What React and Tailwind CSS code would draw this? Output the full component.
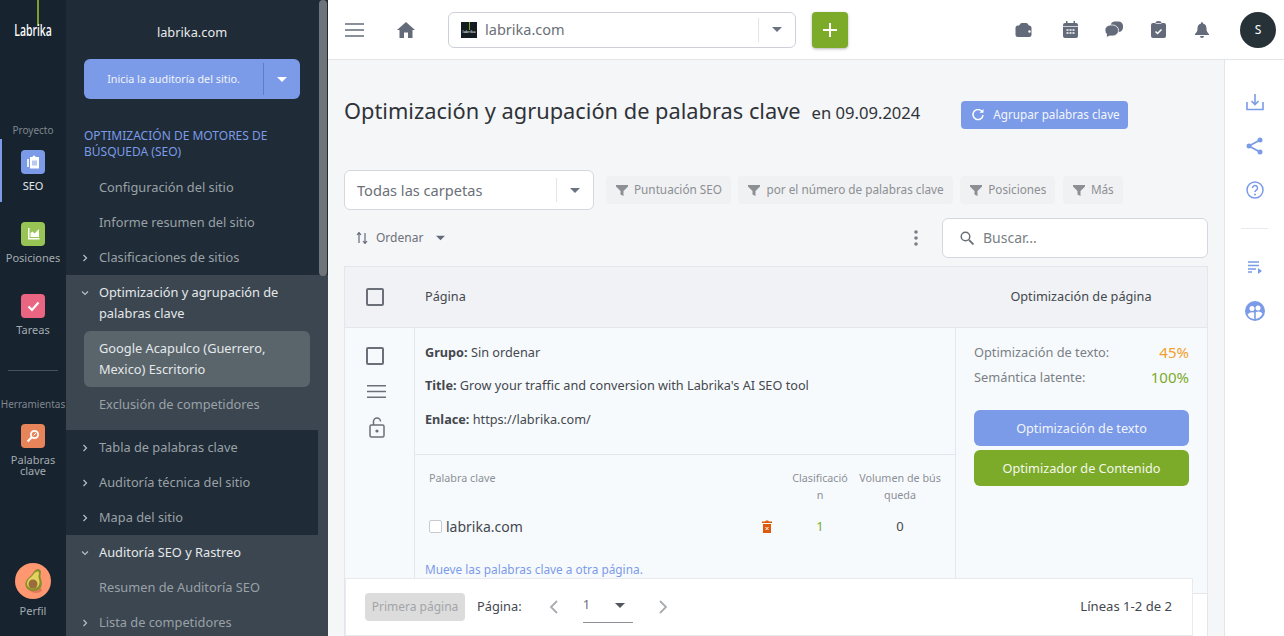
import React from "react";

const sans = "font-['Noto_Sans','Open_Sans',sans-serif]";

function Funnel() {
  return (
    <svg width="12" height="11" viewBox="0 0 12 11" className="shrink-0">
      <path d="M0 0h12v1.4L7.500 6v5L4.500 9.500V6L0 1.400z" fill="#8c8f94" />
    </svg>
  );
}

function Caret({ color = "#6b7280", w = 10, h = 5 }) {
  return (
    <svg width={w} height={h} viewBox="0 0 10 5" className="shrink-0">
      <path d="M0 0h10L5 5z" fill={color} />
    </svg>
  );
}

function Chevron({ open }) {
  return (
    <svg width="8" height="8" viewBox="0 0 8 8" className="shrink-0">
      <path d={open ? "M1 2.500 4 5.500 7 2.500" : "M2.500 1 5.500 4 2.500 7"} fill="none" stroke="#b9c0c6" strokeWidth="1.200" />
    </svg>
  );
}

function NavItem({ chevron, open, active, children, className = "" }) {
  return (
    <div className={`flex items-start pl-[15px] pr-2 ${className}`}>
      <span className="w-[18px] h-[21px] flex items-center shrink-0">
        {chevron && <Chevron open={open} />}
      </span>
      <span className={`text-[12.800px] leading-[21px] ${active ? "text-[#e5e8ea]" : "text-[#9aa1a7]"}`}>{children}</span>
    </div>
  );
}

function RailItem({ label, color, children, active, labelClass = "" }) {
  return (
    <div className="relative flex flex-col items-center w-[66px]">
      {active && <span className="absolute left-0 top-[-11px] w-[2px] h-[63px] bg-[#7b9be8]" />}
      <div className={`w-6 h-6 rounded-[4px] flex items-center justify-center ${color}`}>{children}</div>
      <div className={`mt-[6px] text-[11px] leading-[11px] text-center ${labelClass}`}>{label}</div>
    </div>
  );
}

function TopIcon({ children, className = "" }) {
  return <div className={`w-[18px] h-[18px] flex items-center justify-center ${className}`}>{children}</div>;
}

function Chip({ children }) {
  return (
    <div className="h-[28px] pl-[10px] pr-[9px] flex items-center gap-[6px] bg-[#f0f1f2] rounded-[4px] text-[11.750px] text-[#8c8f94]">
      <Funnel />
      <span>{children}</span>
    </div>
  );
}

function Checkbox() {
  return <div className="w-[18px] h-[18px] border-2 border-[#6b7078] rounded-[2px]" />;
}

export default function App() {
  return (
    <div className={`${sans} w-[1284px] h-[636px] flex overflow-hidden bg-[#f5f6f8]`}>
      {/* rail */}
      <aside className="w-[66px] shrink-0 bg-[#17232e] flex flex-col items-center text-[#a4abb1]">
        <div className="relative h-[45px] w-[66px] flex flex-col items-center">
          <span className="absolute left-[37px] top-0 w-[2px] h-[26px] bg-[#7a9f2a]" />
          <span className="absolute top-[20px] left-0 w-[66px] text-center text-[16px] leading-[20px] font-medium scale-x-[0.66] text-white">Labrika</span>
        </div>
        <div className="mt-[79px] text-[10px] leading-[12px] text-[#7f878e]">Proyecto</div>
        <div className="mt-[14px]">
          <RailItem label="SEO" color="bg-[#7b9be8]" active labelClass="text-[#e8eaec]">
            <svg width="14" height="14" viewBox="0 0 14 14"><path d="M4 2h2.500a1.500 1.500 0 0 1 3 0H13v11.500H4z" fill="#fff" /><path d="M1 4h2v8H1z" fill="#fff" opacity=".85" /><path d="M6 5.500h5v5H6z" fill="#b9c9f2" /></svg>
          </RailItem>
        </div>
        <div className="mt-[31px]">
          <RailItem label="Posiciones" color="bg-[#97c455]">
            <svg width="13" height="13" viewBox="0 0 13 13"><path d="M1 0v11.500h11.500V10H2.500V0z" fill="#fff" /><path d="M3.500 9V5l2-1.500 2 2L12 1v8z" fill="#fff" /></svg>
          </RailItem>
        </div>
        <div className="mt-[31px]">
          <RailItem label="Tareas" color="bg-[#ea6582]">
            <svg width="13" height="11" viewBox="0 0 13 11"><path d="M1.500 5.500 5 9l6.500-7.500" fill="none" stroke="#fff" strokeWidth="2.200" /></svg>
          </RailItem>
        </div>
        <div className="mt-[35px] w-[50px] h-px bg-[#47515b]" />
        <div className="mt-[27px] text-[10px] leading-[12px] text-[#7f878e] whitespace-nowrap">Herramientas</div>
        <div className="mt-[14px]">
          <RailItem label={<>Palabras<br />clave</>} color="bg-[#e8845a]">
            <svg width="14" height="14" viewBox="0 0 14 14"><circle cx="8.500" cy="5.500" r="3.600" fill="none" stroke="#fff" strokeWidth="1.800" /><path d="M6 8 1.500 12.500" stroke="#fff" strokeWidth="2.200" /><path d="M7.500 6.500 10 4" stroke="#fff" /></svg>
          </RailItem>
        </div>
        <div className="mt-[87px] w-[36px] h-[36px] rounded-full bg-[#ff9770] flex items-center justify-center">
          <svg width="24" height="28" viewBox="0 0 24 28">
            <ellipse cx="15" cy="23" rx="6" ry="3" fill="#e0795c" />
            <path d="M17 2c3 0 3.500 3 2.500 6-1 2 2.500 6 1 11-1.500 5-10 7-14 3-4-4-2-9 2-12 3-2 5-8 8.500-8z" fill="#8a8f2c" />
            <path d="M16.500 4.500c1.800 0 1.800 2 1 4-.7 2 2 5 .7 9-1.300 4-7.500 5.500-10.700 2.300-3-3-1-7 2-9.300 2.500-2 4.500-6 7-6z" fill="#e2d25f" />
            <circle cx="12" cy="17" r="4.500" fill="#9a6b3c" />
          </svg>
        </div>
        <div className="mt-[5px] text-[11px] leading-[14px]">Perfil</div>
      </aside>

      {/* nav */}
      <nav className="relative w-[262px] shrink-0 bg-[#3b4650] overflow-hidden">
        <div className="bg-[#1f2b36] h-[275px]">
          <div className="pt-[23px] text-center pr-[10px] text-[12.800px] leading-[18px] text-[#e8eaec]">labrika.com</div>
          <div className="mt-[18px] ml-[18px] w-[216px] h-[40px] bg-[#7b9be8] rounded-[6px] flex items-center text-[10.800px] text-[#f0f3fb]">
            <span className="flex-1 text-center">Inicia la auditoría del sitio.</span>
            <span className="w-px h-8 bg-[#5f7dc7]" />
            <span className="w-[36px] flex justify-center"><Caret color="#fff" /></span>
          </div>
          <div className="mt-[29px] pl-[18px] pr-[30px] text-[12px] leading-[16px] text-[#7b9be8]">OPTIMIZACIÓN DE MOTORES DE BÚSQUEDA (SEO)</div>
          <div className="mt-[17px] flex flex-col gap-[14px]">
            <NavItem>Configuración del sitio</NavItem>
            <NavItem>Informe resumen del sitio</NavItem>
            <NavItem chevron>Clasificaciones de sitios</NavItem>
          </div>
        </div>
        <div className="h-[155px] pt-[7px]">
          <NavItem chevron open active>Optimización y agrupación de palabras clave</NavItem>
          <div className="mt-[7px] ml-[18px] mr-[18px] w-[226px] h-[56px] bg-[#59656b] rounded-[6px] pl-[15px] pt-[7px] text-[12.800px] leading-[21px] text-[#e5e8ea]">Google Acapulco (Guerrero, Mexico) Escritorio</div>
          <NavItem className="mt-[7px]">Exclusión de competidores</NavItem>
        </div>
        <div className="w-[252px] h-[105px] bg-[#1f2b36] pt-[7px] flex flex-col gap-[14px]">
          <NavItem chevron>Tabla de palabras clave</NavItem>
          <NavItem chevron>Auditoría técnica del sitio</NavItem>
          <NavItem chevron>Mapa del sitio</NavItem>
        </div>
        <div className="pt-[7px] flex flex-col gap-[14px]">
          <NavItem chevron open active>Auditoría SEO y Rastreo</NavItem>
          <NavItem>Resumen de Auditoría SEO</NavItem>
          <NavItem chevron>Lista de competidores</NavItem>
        </div>
        <div className="absolute right-[1px] top-0 w-[8px] h-[276px] rounded-[4px] bg-[#6f747a]" />
      </nav>

      {/* main */}
      <div className="flex-1 min-w-0 flex flex-col">
        <header className="h-[60px] shrink-0 bg-white border-b border-[#e4e5e9] flex items-center pl-[17px] pr-[8px]">
          <svg width="19" height="14" viewBox="0 0 19 14"><path d="M0 1h19M0 7h19M0 13h19" stroke="#666d79" strokeWidth="1.700" /></svg>
          <svg className="ml-[33px]" width="18" height="16" viewBox="0 0 18 16"><path d="M9 0 0 8h2.500v8H7v-5.500h4V16h4.500V8H18z" fill="#636b7b" /></svg>
          <div className="ml-[33px] w-[348px] h-[36px] bg-white border border-[#cdd0db] rounded-[6px] flex items-center pl-[12px]">
            <span className="relative w-4 h-4 bg-[#141c22] flex items-center justify-center">
              <span className="absolute top-0 w-px h-2 bg-[#7cab2a]" />
              <span className="text-[4px] leading-none text-white mt-1">labrika</span>
            </span>
            <span className="ml-2 text-[14.500px] text-[#6b7078]">labrika.com</span>
            <span className="ml-auto w-px h-6 bg-[#e4e5e9]" />
            <span className="w-[36px] flex justify-center"><Caret /></span>
          </div>
          <button className="ml-[16px] w-[36px] h-[36px] rounded-[4px] bg-[#7cab2a] shadow-[0_1px_3px_rgba(0,0,0,0.3)] flex items-center justify-center">
            <svg width="14" height="14" viewBox="0 0 14 14"><path d="M7 0v14M0 7h14" stroke="#fff" strokeWidth="2" /></svg>
          </button>
          <div className="ml-auto flex items-center gap-[26px]">
            <TopIcon className="mr-[3px]">
              <svg width="17" height="16" viewBox="0 0 17 16"><path d="M3.500 4.500 5.500 1.500Q6 1 7 1h4q1 0 1.500.5l2 3z" fill="#636b7b" /><rect x="0.500" y="3.500" width="16" height="11.500" rx="2.500" fill="#636b7b" /><circle cx="14.500" cy="9.500" r="1.200" fill="#fff" /></svg>
            </TopIcon>
            <TopIcon>
              <svg width="15" height="17" viewBox="0 0 15 17"><path d="M0 4q0-2 2-2h1V0h1.500v2h6V0H12v2h1q2 0 2 2v11q0 2-2 2H2q-2 0-2-2z" fill="#636b7b" /><path d="M0 5.500h15" stroke="#fff" strokeWidth=".7" /><path d="M3.500 9h2M6.500 9h2M9.500 9h2M3.500 12h2M6.500 12h2M9.500 12h2" stroke="#fff" strokeWidth="1.500" /></svg>
            </TopIcon>
            <TopIcon>
              <svg width="18" height="17" viewBox="0 0 18 17"><rect x="5.500" y="0.500" width="12.500" height="10.500" rx="4.500" fill="#636b7b" /><path d="M0 9.500a5.500 5 0 0 1 5.500-5.500h2a5.500 5 0 0 1 0 11h-3L1.500 16.500V13Q0 11.500 0 9.500z" fill="#636b7b" stroke="#fff" strokeWidth=".8" /></svg>
            </TopIcon>
            <TopIcon>
              <svg width="15" height="17" viewBox="0 0 15 17"><path d="M0 4q0-2 2-2h2.500a3 2 0 0 1 6 0H13q2 0 2 2v11q0 2-2 2H2q-2 0-2-2z" fill="#636b7b" /><path d="M4.500 2.500h6" stroke="#fff" strokeWidth=".7" /><path d="m4.500 10.500 2 2 4-4" fill="none" stroke="#fff" strokeWidth="1.500" /></svg>
            </TopIcon>
            <TopIcon>
              <svg width="14" height="16" viewBox="0 0 14 16"><path d="M7 0q1 0 1 1.500c2.500.5 3.500 2.500 3.500 5 0 3 1 4 2.500 5.500v1H0v-1c1.500-1.500 2.500-2.500 2.500-5.500 0-2.500 1-4.500 3.500-5Q6 0 7 0zM5 14h4a2 2 0 0 1-4 0z" fill="#636b7b" /></svg>
            </TopIcon>
          </div>
          <div className="ml-[29px] w-[36px] h-[36px] rounded-full bg-[#263238] flex items-center justify-center text-[12px] text-white">S</div>
        </header>

        <div className="flex-1 min-h-0 flex">
          <main className="relative flex-1 min-w-0 pl-[16px] pr-[16px] overflow-hidden">
            <div className="h-[110px] flex items-center">
              <h1 className="text-[21.800px] leading-[28px] font-normal text-[#2f3338] mb-[8px]">Optimización y agrupación de palabras clave</h1>
              <span className="ml-[11px] text-[16.600px] text-[#2f3338] mb-[4px]">en 09.09.2024</span>
              <button className="ml-[41px] mb-[1px] h-[28px] pl-[11px] pr-[8px] bg-[#7b9be8] rounded-[4px] flex items-center gap-[9px] text-[11.700px] text-[#f4f6fc]">
                <svg width="12" height="12" viewBox="0 0 12 12"><path d="M10.300 3A5 5 0 1 0 11 6" fill="none" stroke="#fff" strokeWidth="1.500" /><path d="M7.500 3.800H11.500V0z" fill="#fff" /></svg>
                Agrupar palabras clave
              </button>
            </div>
            <div className="flex items-center">
              <div className="w-[250px] h-[40px] bg-white border border-[#d5d8e1] rounded-[6px] flex items-center pl-[12px] text-[14.600px] text-[#6b7078]">
                <span className="mt-[1px]">Todas las carpetas</span>
                <span className="ml-auto w-px h-6 bg-[#e4e5e9]" />
                <span className="w-[36px] flex justify-center"><Caret /></span>
              </div>
              <div className="ml-[12px] flex gap-[7.500px]">
                <Chip>Puntuación SEO</Chip>
                <Chip>por el número de palabras clave</Chip>
                <Chip>Posiciones</Chip>
                <Chip>Más</Chip>
              </div>
            </div>
            <div className="mt-[8px] h-[40px] flex items-center">
              <svg className="ml-[12px]" width="12" height="12" viewBox="0 0 12 12"><path d="M3 11V1M1 3l2-2.500L5 3M9 1v10M7 9l2 2.500L11 9" fill="none" stroke="#636b7b" strokeWidth="1.200" /></svg>
              <span className="ml-[8px] text-[12px] text-[#6b7078]">Ordenar</span>
              <span className="ml-[13px]"><Caret color="#636b7b" w={9} h={6} /></span>
              <svg className="ml-auto mr-[24px]" width="4" height="16" viewBox="0 0 4 16"><circle cx="2" cy="2" r="1.800" fill="#7a7f85" /><circle cx="2" cy="8" r="1.800" fill="#7a7f85" /><circle cx="2" cy="14" r="1.800" fill="#7a7f85" /></svg>
              <div className="w-[266px] h-[40px] bg-white border border-[#d5d8e1] rounded-[6px] flex items-center pl-[17px] gap-[9px] text-[14px] text-[#7a7f85]">
                <svg width="14" height="14" viewBox="0 0 14 14"><circle cx="5.500" cy="5.500" r="4.300" fill="none" stroke="#6b7078" strokeWidth="1.500" /><path d="m9 9 4.500 4.500" stroke="#6b7078" strokeWidth="1.800" /></svg>
                <span className="mb-[2px]">Buscar...</span>
              </div>
            </div>

            <div className="mt-[8px] border border-[#e4e6ec] border-b-0">
              <div className="h-[61px] bg-[#f0f2f5] border-b border-[#e4e6ec] flex items-center text-[12.700px] text-[#44484e]">
                <div className="w-[70px] pl-[21px]"><Checkbox /></div>
                <div className="flex-1 pl-[10px]">Página</div>
                <div className="w-[252px] text-center">Optimización de página</div>
              </div>
              <div className="flex h-[266px] bg-[#f7fafd] border-b border-[#e4e6ec]">
                <div className="w-[70px] border-r border-[#e4e6ec] flex flex-col items-start pt-[19px] pl-[21px]">
                  <Checkbox />
                  <svg className="mt-[20px] ml-[1px]" width="19" height="13" viewBox="0 0 19 13"><path d="M0 .75h19M0 6.500h19M0 12.250h19" stroke="#6b7078" strokeWidth="1.300" /></svg>
                  <svg className="mt-[19px] ml-[3px]" width="16" height="21" viewBox="0 0 16 21"><rect x="1" y="8" width="14" height="12" rx="1.500" fill="none" stroke="#6b7078" strokeWidth="1.500" /><path d="M4.500 8V4.500a3.500 3.500 0 0 1 7 0" fill="none" stroke="#6b7078" strokeWidth="1.500" /><circle cx="8" cy="14" r="1.600" fill="#6b7078" /></svg>
                </div>
                <div className="flex-1 min-w-0 flex flex-col">
                  <div className="h-[127px] border-b border-[#e4e6ec] pl-[10px] pt-[14px] text-[12.700px] leading-[20px] text-[#44484e]">
                    <p><b>Grupo:</b> Sin ordenar</p>
                    <p className="mt-[13px]"><b>Title:</b> Grow your traffic and conversion with Labrika's AI SEO tool</p>
                    <p className="mt-[14px]"><b>Enlace:</b> https://labrika.com/</p>
                  </div>
                  <div className="flex-1 relative">
                    <div className="flex pt-[15px] pl-[14px] text-[10.750px] leading-[17px] text-[#8c9096]">
                      <div className="flex-1">Palabra clave</div>
                      <div className="w-[60px] text-center break-all">Clasificación</div>
                      <div className="w-[88px] ml-[6px] mr-[11px] text-center break-all">Volumen de búsqueda</div>
                    </div>
                    <div className="flex items-center mt-[12px] pl-[14px]">
                      <div className="w-[13px] h-[13px] border border-[#c8cacd] rounded-[2px] bg-white" />
                      <span className="ml-[4px] text-[14px] text-[#44484e]">labrika.com</span>
                      <svg className="ml-auto" width="10" height="13" viewBox="0 0 10 13"><path d="M0 1.500h3L4 .5h2l1 1h3V3H0z" fill="#dc5a0e" /><path d="M1 4h8v9H1z" fill="#dc5a0e" /><path d="m3.500 7 3 3m0-3-3 3" stroke="#fff" /></svg>
                      <span className="w-[60px] ml-[18px] text-center text-[13px] text-[#7cab2a]">1</span>
                      <span className="w-[88px] ml-[6px] mr-[11px] text-center text-[13px] text-[#44484e]">0</span>
                    </div>
                    <div className="mt-[24px] pl-[10px] text-[11.850px] leading-[16px] text-[#7b9be8]">Mueve las palabras clave a otra página.</div>
                  </div>
                </div>
                <div className="w-[252px] border-l border-[#e4e6ec] pl-[18px] pr-[18px] pt-[12px]">
                  <div className="flex items-center justify-between h-[25px] text-[12.800px] text-[#7a7f85]"><span>Optimización de texto:</span><span className="text-[15px] text-[#f0a02e]">45%</span></div>
                  <div className="flex items-center justify-between h-[25px] text-[12.800px] text-[#7a7f85]"><span>Semántica latente:</span><span className="text-[15px] text-[#7cab2a]">100%</span></div>
                  <div className="mt-[20px] h-[36px] pt-[1px] rounded-[6px] bg-[#7b9be8] text-[#f0f3fb] text-[12.700px] flex items-center justify-center">Optimización de texto</div>
                  <div className="mt-[4px] h-[36px] pt-[1px] rounded-[6px] bg-[#7cab2a] text-[#f4f8ea] text-[12.700px] flex items-center justify-center">Optimizador de Contenido</div>
                </div>
              </div>
              <div className="h-[60px] bg-white" />
            </div>
            <div className="absolute left-[17px] bottom-0 w-[848px] h-[58px] bg-white border border-[#e8eaef] flex items-center pl-[19px] pr-[20px]">
              <div className="h-[28px] w-[100px] rounded-[4px] bg-[#dcdcdc] flex items-center justify-center text-[12px] text-[#a3a5a8]">Primera página</div>
              <span className="ml-[12px] text-[12.800px] text-[#44484e]">Página:</span>
              <svg className="ml-[27px]" width="9" height="14" viewBox="0 0 9 14"><path d="M8 1 2 7l6 6" fill="none" stroke="#a8abb0" strokeWidth="1.800" /></svg>
              <div className="ml-[25px] mb-[2px] w-[50px] h-[34px] border-b border-[#8c8f94] flex items-center justify-between pr-[8px] pb-[1px] text-[13px] text-[#6b7078]"><span>1</span><Caret color="#53585f" /></div>
              <svg className="ml-[26px]" width="9" height="14" viewBox="0 0 9 14"><path d="m1 1 6 6-6 6" fill="none" stroke="#a8abb0" strokeWidth="1.800" /></svg>
              <span className="ml-auto text-[13.100px] text-[#44484e]">Líneas 1-2 de 2</span>
            </div>
          </main>
          <aside className="w-[60px] shrink-0 bg-white border-l border-[#e4e5e9] flex flex-col items-center pt-[33px]">
            <svg width="18" height="18" viewBox="0 0 18 18"><path d="M1 9v7.500h16V9" fill="none" stroke="#7b9be8" strokeWidth="1.600" /><path d="M9 1v10M5.500 8 9 11.500 12.500 8" fill="none" stroke="#7b9be8" strokeWidth="1.600" /></svg>
            <svg className="mt-[26px]" width="17" height="18" viewBox="0 0 17 18"><path d="M14 3 3 9l11 6" fill="none" stroke="#7b9be8" strokeWidth="1.800" /><circle cx="14" cy="3" r="2.500" fill="#7b9be8" /><circle cx="3" cy="9" r="2.500" fill="#7b9be8" /><circle cx="14" cy="15" r="2.500" fill="#7b9be8" /></svg>
            <svg className="mt-[26px]" width="18" height="18" viewBox="0 0 18 18"><circle cx="9" cy="9" r="8" fill="none" stroke="#7b9be8" strokeWidth="1.500" /><path d="M6.500 7a2.500 2.500 0 1 1 3.800 2.100c-.9.600-1.300 1-1.300 2" fill="none" stroke="#7b9be8" strokeWidth="1.500" /><circle cx="9" cy="13.500" r="1" fill="#7b9be8" /></svg>
            <div className="mt-[29px] w-[27px] h-px bg-[#e8eaef]" />
            <svg className="mt-[32px]" width="14" height="13" viewBox="0 0 14 13"><path d="M0 1h11M0 4.500h11M0 8h8M0 11h4" stroke="#7b9be8" strokeWidth="1.400" /><path d="M10 7l4 3-4 3z" fill="#7b9be8" /></svg>
            <svg className="mt-[27px]" width="20" height="20" viewBox="0 0 20 20"><circle cx="10" cy="10" r="10" fill="#7b9be8" /><circle cx="7" cy="7.500" r="2.500" fill="#fff" /><circle cx="13" cy="7" r="2.500" fill="#fff" /><path d="M2.500 13.500Q5 10.500 9.200 11.500V18Q4.500 17.500 2.500 13.500zM10.800 11.200Q14.500 9.500 17.500 12.500 15.500 17 10.800 18z" fill="#fff" /></svg>
          </aside>
        </div>
      </div>
    </div>
  );
}
